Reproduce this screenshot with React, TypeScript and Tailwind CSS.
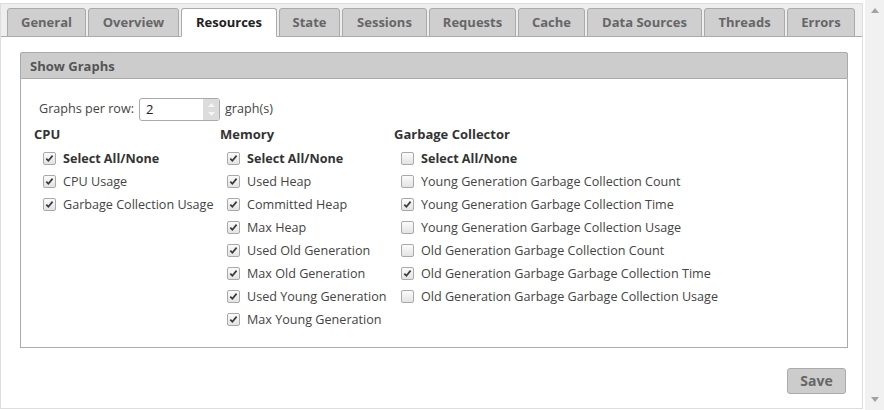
import React from "react";

const tabs = [
  { label: "General", w: "w-[79px]" },
  { label: "Overview", w: "w-[91px]" },
  { label: "Resources", w: "w-[96px]", active: true },
  { label: "State", w: "w-[61px]" },
  { label: "Sessions", w: "w-[85px]" },
  { label: "Requests", w: "w-[87px]" },
  { label: "Cache", w: "w-[67px]" },
  { label: "Data Sources", w: "w-[115px]" },
  { label: "Threads", w: "w-[81px]" },
  { label: "Errors", w: "w-[68px]" },
];

const columns = [
  {
    title: "CPU",
    w: "w-[186px]",
    pad: "pl-[9px]",
    all: true,
    items: [
      ["CPU Usage", true],
      ["Garbage Collection Usage", true],
    ],
  },
  {
    title: "Memory",
    w: "w-[174px]",
    pad: "pl-[7px]",
    all: true,
    items: [
      ["Used Heap", true],
      ["Committed Heap", true],
      ["Max Heap", true],
      ["Used Old Generation", true],
      ["Max Old Generation", true],
      ["Used Young Generation", true],
      ["Max Young Generation", true],
    ],
  },
  {
    title: "Garbage Collector",
    w: "flex-1",
    pad: "pl-[7px]",
    all: false,
    items: [
      ["Young Generation Garbage Collection Count", false],
      ["Young Generation Garbage Collection Time", true],
      ["Young Generation Garbage Collection Usage", false],
      ["Old Generation Garbage Collection Count", false],
      ["Old Generation Garbage Garbage Collection Time", true],
      ["Old Generation Garbage Garbage Collection Usage", false],
    ],
  },
] as const;

function Box({ checked }: { checked: boolean }) {
  return (
    <span className="w-[13px] h-[13px] shrink-0 rounded-[2px] border border-[#a9a9a9] bg-linear-to-b from-[#fbfbfb] to-[#e3e3e3] flex items-center justify-center">
      {checked && (
        <svg width="9" height="9" viewBox="0 0 9 9">
          <path d="M1.3 4.6 L3.4 6.8 L7.6 1.6" stroke="#3a3a3a" strokeWidth="1.7" fill="none" />
        </svg>
      )}
    </span>
  );
}

function Row({ label, checked, bold, pad }: { label: string; checked: boolean; bold?: boolean; pad: string }) {
  return (
    <div className={`h-[23px] flex items-center gap-[7px] ${pad}`}>
      <Box checked={checked} />
      <span className={bold ? "font-bold text-[#333]" : "text-[#444]"}>{label}</span>
    </div>
  );
}

export default function App() {
  return (
    <div className="flex w-[884px] h-[410px] bg-white font-['Open_Sans',sans-serif] text-[12.6px] leading-[18px]">
      <div className="w-[865px] pt-[3px]">
        <div className="w-[863px] h-[406px] border border-[#dddddd] flex flex-col">
          <div className="h-[33px] shrink-0 bg-[#eeeeee] border-b border-[#aaaaaa] flex items-end gap-[2px] pl-[6px]">
            {tabs.map((t) => (
              <div
                key={t.label}
                className={`${t.w} h-[29px] -mb-px flex items-center justify-center pb-[2px] font-bold text-[13px] rounded-t-[3px] border ${
                  t.active
                    ? "bg-white border-[#aaaaaa] border-b-white text-[#222]"
                    : "bg-[#cfcfcf] border-[#aaaaaa] text-[#666]"
                }`}
              >
                {t.label}
              </div>
            ))}
          </div>

          <div className="flex-1 pl-[19px] pr-[14px] pt-[15px]">
            <div className="w-[828px]">
              <div className="h-[27px] bg-[#cccccc] border border-[#aaaaaa] rounded-t-[2px] flex items-center pl-[9px] font-bold text-[13px] text-[#555]">
                Show Graphs
              </div>
              <div className="border border-t-0 border-[#aaaaaa] pt-[19px] pb-[16px] pl-[13px]">
                <div className="flex items-center h-[22px] pl-[5px] text-[#444]">
                  <span>Graphs per row:</span>
                  <div className="ml-[5px] w-[81px] h-[23px] border border-[#aaaaaa] rounded-[3px] flex overflow-hidden">
                    <span className="flex-1 pl-[6px] flex items-center text-[#222] text-[13px]">2</span>
                    <span className="w-[16px] bg-[#dcdcdc] flex flex-col items-center justify-center gap-[5px]">
                      <svg width="7" height="4" viewBox="0 0 7 4">
                        <path d="M0 4 L3.5 0 L7 4 Z" fill="#f5f5f5" />
                      </svg>
                      <svg width="7" height="4" viewBox="0 0 7 4">
                        <path d="M0 0 L3.5 4 L7 0 Z" fill="#f5f5f5" />
                      </svg>
                    </span>
                  </div>
                  <span className="ml-[5px]">graph(s)</span>
                </div>

                <div className="flex mt-[4px]">
                  {columns.map((c) => (
                    <div key={c.title} className={c.w}>
                      <div className="h-[23px] pt-[1px] font-bold text-[13px] text-[#333]">{c.title}</div>
                      <Row label="Select All/None" checked={c.all} bold pad={c.pad} />
                      {c.items.map(([label, checked]) => (
                        <Row key={label} label={label} checked={checked} pad={c.pad} />
                      ))}
                    </div>
                  ))}
                </div>
              </div>
            </div>

            <div className="flex justify-end mt-[20px] pr-[2px]">
              <button className="w-[59px] h-[26px] bg-[#cccccc] border border-[#aaaaaa] rounded-[3px] font-bold text-[#666] text-[14px]">
                Save
              </button>
            </div>
          </div>
        </div>
      </div>

      <div className="w-[19px] bg-[#f1f1f1] flex flex-col items-center justify-between py-[8px]">
        <svg width="8" height="5" viewBox="0 0 8 5">
          <path d="M0 5 L4 0 L8 5 Z" fill="#a3a3a3" />
        </svg>
        <svg width="8" height="5" viewBox="0 0 8 5">
          <path d="M0 0 L4 5 L8 0 Z" fill="#a3a3a3" />
        </svg>
      </div>
    </div>
  );
}
